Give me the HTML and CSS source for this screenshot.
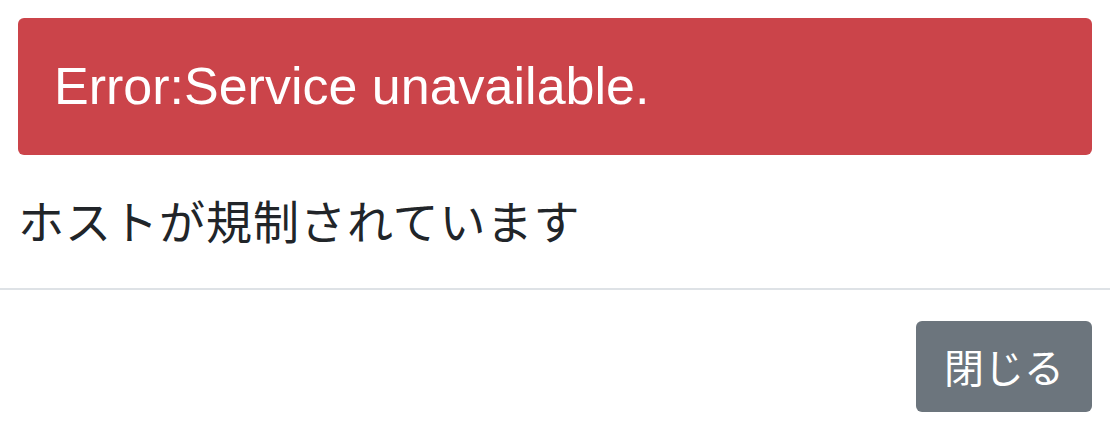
FILE: index.html
```html
<!DOCTYPE html>
<html lang="ja">
<head>
<meta charset="utf-8">
<link rel="stylesheet" href="styles.css">
</head>
<body>
<div class="modal">
  <div class="modal-body">
    <div class="alert">Error:Service unavailable.</div>
    <p class="message">ホストが規制されています</p>
  </div>
  <div class="modal-footer">
    <button class="btn">閉じる</button>
  </div>
</div>
</body>
</html>
```
FILE: styles.css
```css
html, body {
  margin: 0;
  padding: 0;
  background: #ffffff;
}
body {
  font-family: "Noto Sans CJK JP", "Noto Sans", sans-serif;
  color: #212529;
}
.modal-body {
  padding: 18px 18px 36px 18px;
}
.alert {
  background: #cb444a;
  color: #ffffff;
  border-radius: 6px;
  padding: 38px 35px 38px 36px;
  font-family: "Liberation Sans", "Noto Sans CJK JP", sans-serif;
  font-size: 52px;
  line-height: 61px;
}
.message {
  margin: 31px 0 0 0;
  font-size: 46px;
  line-height: 66px;
  letter-spacing: 1px;
}
.modal-footer {
  border-top: 2px solid #dee2e6;
  display: flex;
  justify-content: flex-end;
  padding: 31px 18px 0 18px;
}
.btn {
  background: #6c757d;
  color: #ffffff;
  border: none;
  border-radius: 6px;
  font-family: "Noto Sans CJK JP", sans-serif;
  font-size: 40px;
  line-height: 61px;
  padding: 15px 28px;
}
```
